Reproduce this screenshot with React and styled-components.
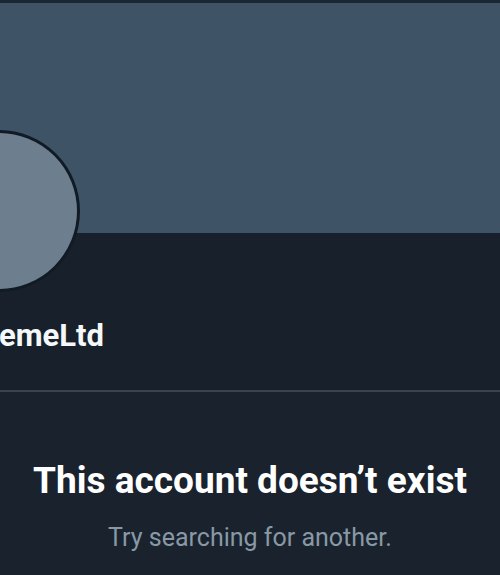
import React from 'react';
import styled, { createGlobalStyle } from 'styled-components';

const Global = createGlobalStyle`
  html, body {
    margin: 0;
    padding: 0;
    background: #17202a;
    overflow: hidden;
  }
  body {
    font-family: Roboto, "Liberation Sans", sans-serif;
  }
`;

const Screen = styled.div`
  width: 500px;
  height: 575px;
  display: flex;
  flex-direction: column;
  background: #18212b;
  overflow: hidden;
`;

const StatusEdge = styled.div`
  height: 3px;
  background: #1b2631;
`;

const Banner = styled.div`
  height: 230px;
  background: #3e5366;
  position: relative;
`;

// avatar overlaps the banner's lower edge
const Avatar = styled.div`
  position: absolute;
  left: -82px;
  top: 127px;
  width: 156px;
  height: 156px;
  border-radius: 50%;
  background: #6d7f8e;
  border: 3px solid #111b25;
`;

const Profile = styled.div`
  height: 157px;
  display: flex;
  align-items: flex-start;
  padding-top: 85px;
  box-sizing: border-box;
`;

const Handle = styled.div`
  margin-left: -1px;
  font-size: 31px;
  font-weight: 700;
  color: #f5f8fa;
  line-height: 36px;
`;

const Divider = styled.div`
  height: 2px;
  background: #38444f;
`;

const Empty = styled.div`
  flex: 1;
  display: flex;
  flex-direction: column;
  align-items: center;
  padding-top: 68px;
  background: #1a222d;
`;

const Title = styled.div`
  font-size: 37px;
  font-weight: 700;
  color: #ffffff;
  line-height: 42px;
`;

const Sub = styled.div`
  margin-top: 21px;
  font-size: 25px;
  color: #8899a6;
  line-height: 30px;
`;

export default function App() {
  return (
    <Screen>
      <Global />
      <StatusEdge />
      <Banner>
        <Avatar />
      </Banner>
      <Profile>
        <Handle>emeLtd</Handle>
      </Profile>
      <Divider />
      <Empty>
        <Title>This account doesn’t exist</Title>
        <Sub>Try searching for another.</Sub>
      </Empty>
    </Screen>
  );
}
